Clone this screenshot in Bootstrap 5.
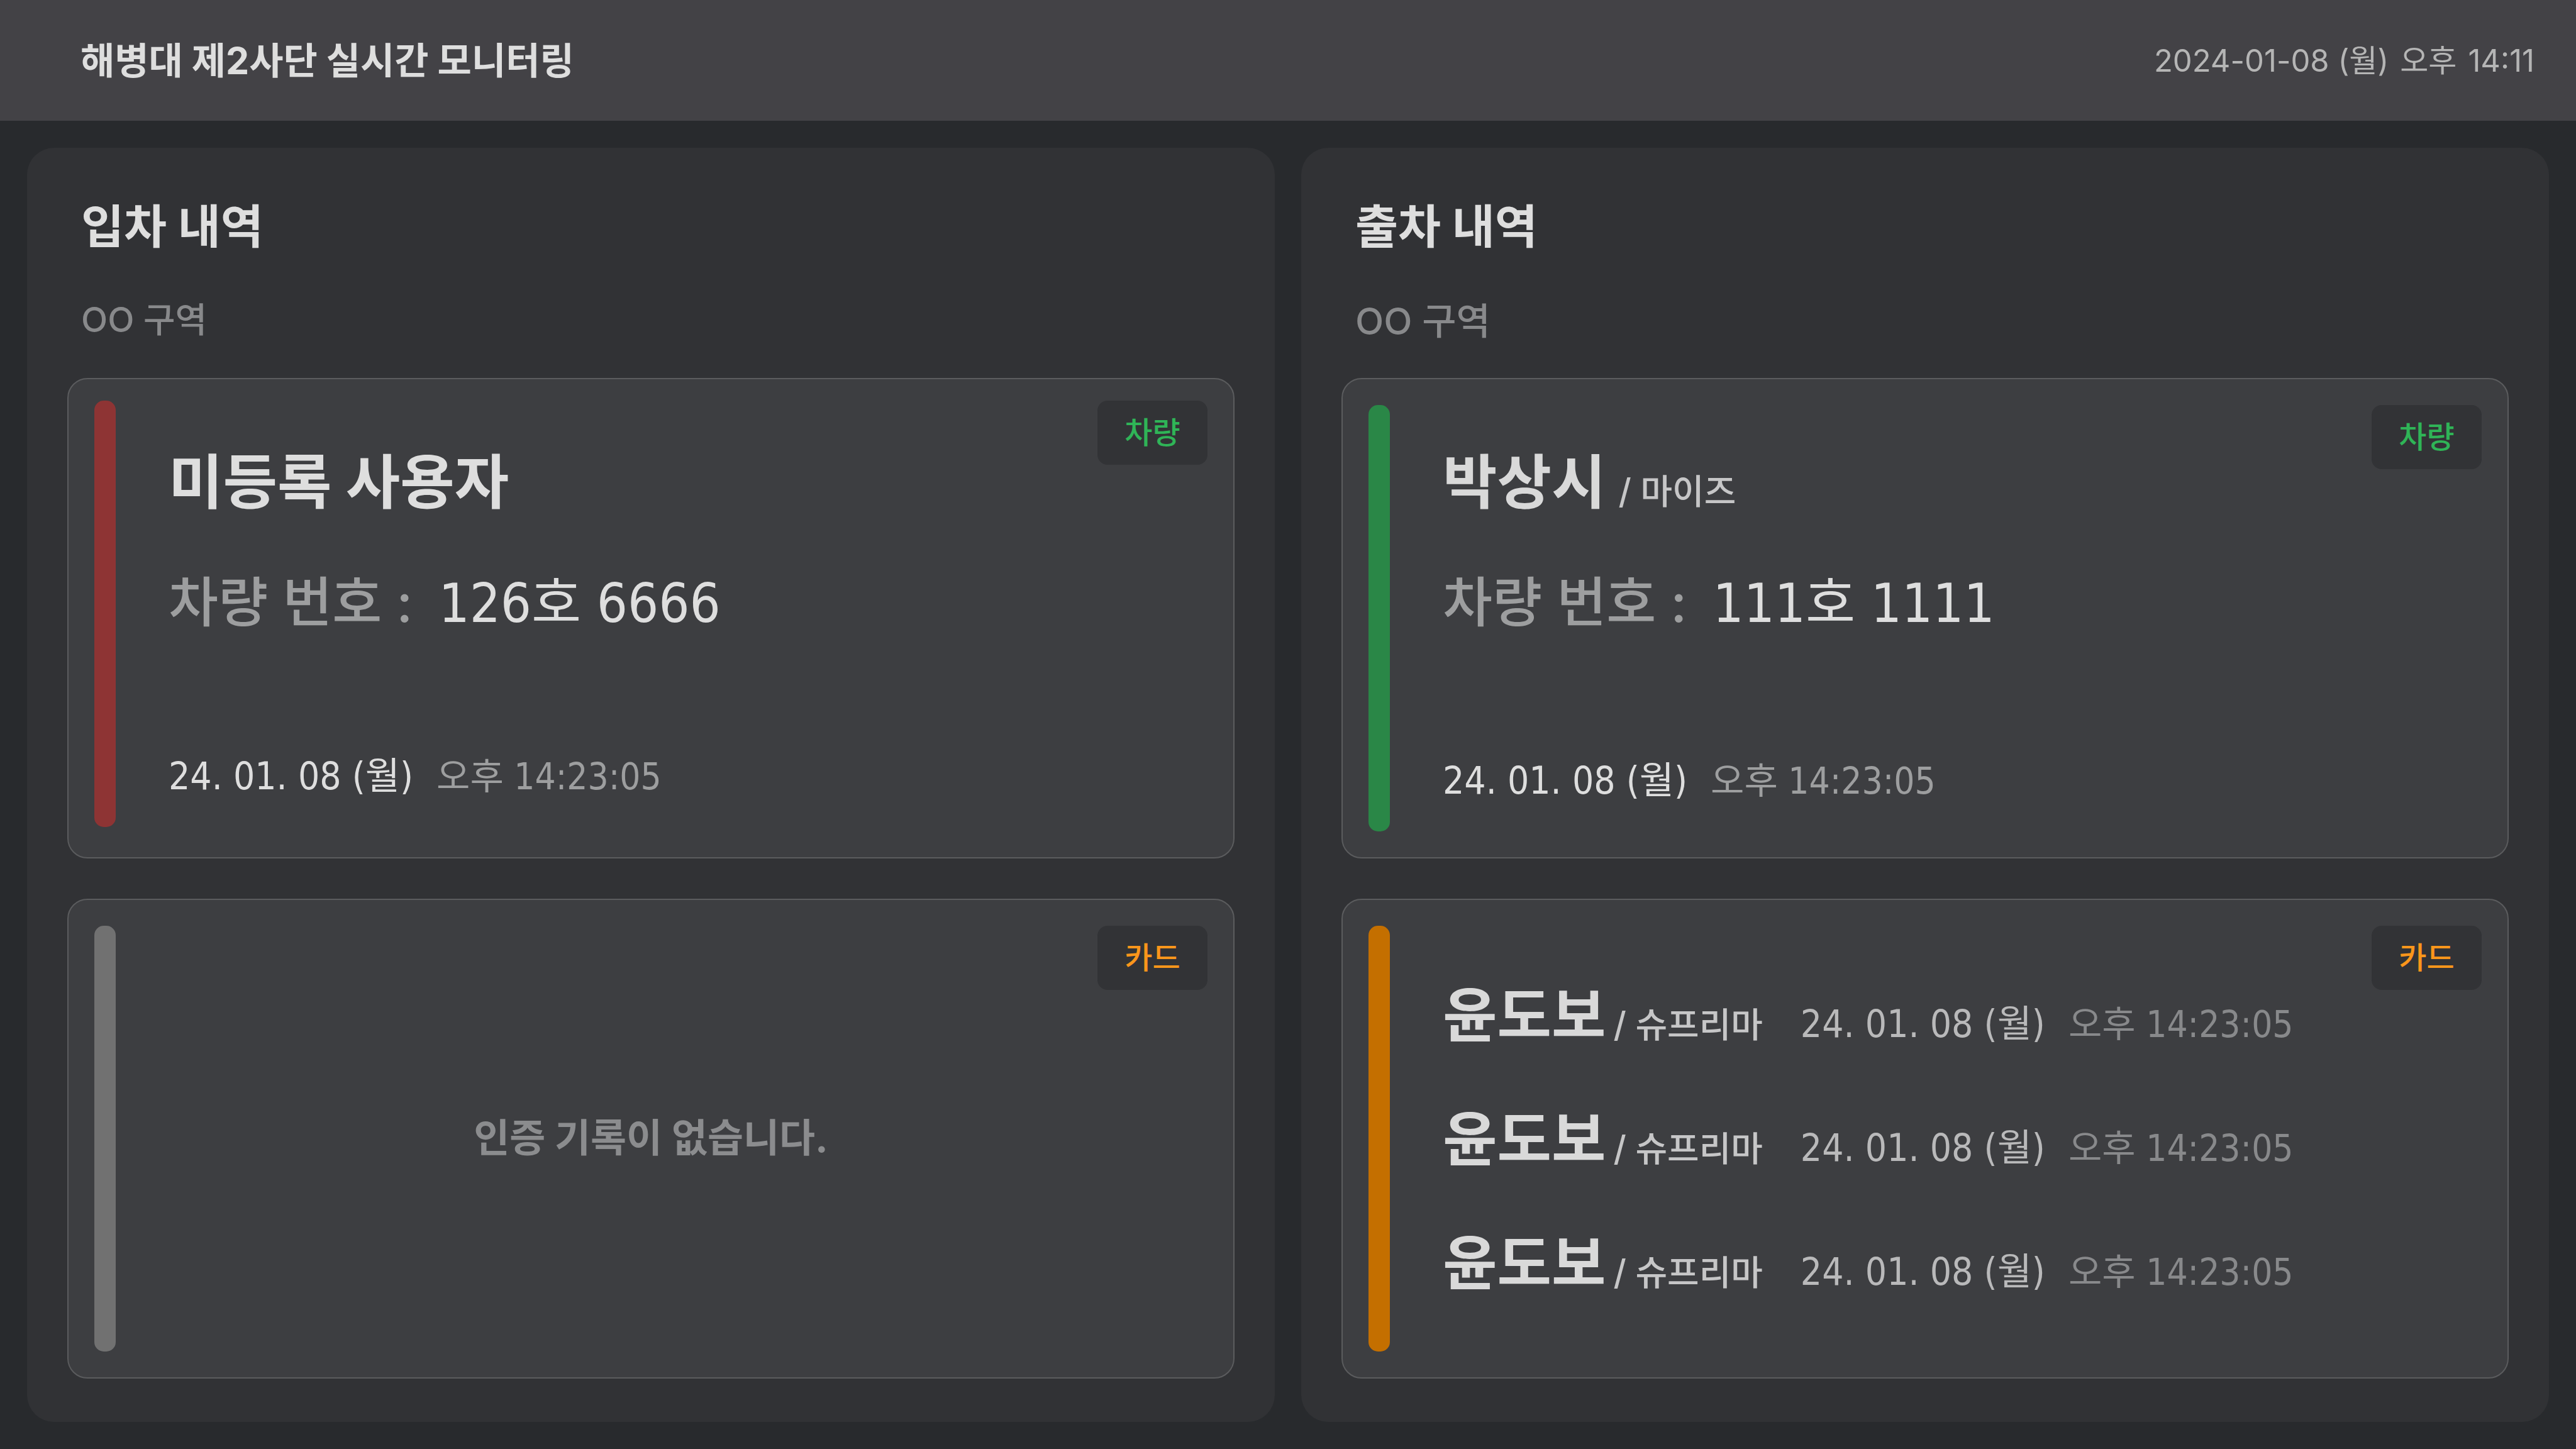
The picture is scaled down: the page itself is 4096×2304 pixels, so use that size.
<!DOCTYPE html>
<html lang="ko">
<head>
<meta charset="utf-8">
<meta name="viewport" content="width=device-width, initial-scale=1">
<title>해병대 제2사단 실시간 모니터링</title>
<link href="https://cdn.jsdelivr.net/npm/bootstrap@5.3.0/dist/css/bootstrap.min.css" rel="stylesheet">
<style>
  body { background: #282a2d; color: #dedede; font-family: Inter, "Noto Sans CJK KR", sans-serif; }
  h1, h2, p { margin: 0; }
  .topbar { background: #434246; min-height: 192px; padding: 2px 66px 0 128px; }
  .topbar h1 { font-size: 59px; line-height: 80px; font-weight: 700; margin: 0; }
  .clock { font-size: 49px; line-height: 80px; color: #b5b5b5; gap: 18px; }
  .board { padding: 43px; gap: 42px; }
  .panel { flex: 1 1 0; min-width: 0; background: #313235; border-radius: 43px; padding: 77px 64px 69px; }
  .panel-head { min-height: 289px; padding-left: 22px; }
  .panel-head h2 { font-size: 74px; line-height: 96px; font-weight: 700; margin: 0; }
  .zone { margin-top: 64px; font-size: 55px; line-height: 72px; font-weight: 500; color: #88898b; }
  .zone-lg { font-size: 59px; line-height: 78px; }
  .log-list { gap: 64px; }
  .log { flex: 1 1 0; position: relative; background: #3d3e41; border: 2px solid #5b5c5e; border-radius: 32px; padding: 41px; }
  .log-raised { padding-top: 34px; padding-bottom: 48px; }
  .bar { flex: none; width: 34px; border-radius: 15px; }
  .bar-denied { background: #8e3434; }
  .bar-granted { background: #2a8747; }
  .bar-card { background: #c46f00; }
  .bar-none { background: #717171; }
  .log-body { padding: 63px 34px 40px 84px; }
  .log-raised .log-body { padding-top: 70px; }
  .log-rows { padding: 4px 34px 0 84px; gap: 77px; }
  .tag { position: absolute; top: 41px; right: 41px; width: 175px; height: 102px; border-radius: 16px; background: #323336; font-size: 48px; line-height: 64px; font-weight: 500; }
  .log-raised .tag { top: 34px; }
  .tag-car { color: #2fb457; }
  .tag-card { color: #fa961b; }
  .who { font-size: 94px; line-height: 120px; font-weight: 700; }
  .who-known { color: #d9d9d9; }
  .dept { font-size: 55px; line-height: 80px; font-weight: 500; color: #c6c6c7; margin-left: 12px; }
  .log-body .dept { margin-left: 20px; }
  .plate { margin-top: 71px; line-height: 120px; gap: 41px; font-size: 86px; }
  .plate-label { color: #9d9e9f; font-weight: 500; }
  .plate-no, .stamp { font-family: "DejaVu Sans Condensed", "Noto Sans CJK KR", sans-serif; }
  .stamp { font-size: 60px; line-height: 80px; gap: 37px; }
  .stamp-time { color: #9d9e9f; font-size: 58px; }
  .log-rows .stamp { margin-left: 60px; color: #b9b9ba; }
  .log-rows .stamp-time { color: #88898b; }
  .blank { font-size: 62px; line-height: 80px; font-weight: 700; color: #8b8c8e; padding-right: 34px; }
</style>
</head>
<body>
<div class="d-flex flex-column min-vh-100">
  <header class="topbar d-flex align-items-center justify-content-between">
    <h1>해병대 제2사단 실시간 모니터링</h1>
    <div class="clock d-flex"><span>2024-01-08 (월)</span><span>오후</span><span>14:11</span></div>
  </header>
  <main class="board d-flex flex-fill">
    <section class="panel d-flex flex-column">
      <div class="panel-head">
        <h2>입차 내역</h2>
        <p class="zone">OO 구역</p>
      </div>
      <div class="log-list d-flex flex-column flex-fill">
        <article class="log log-raised d-flex">
          <div class="bar bar-denied"></div>
          <div class="log-body d-flex flex-column flex-fill">
            <div class="who">미등록 사용자</div>
            <div class="plate d-flex align-items-baseline"><span class="plate-label">차량 번호 :</span><span class="plate-no">126호 6666</span></div>
            <div class="stamp d-flex align-items-baseline mt-auto"><span>24. 01. 08 (월)</span><span class="stamp-time">오후 14:23:05</span></div>
          </div>
          <span class="tag tag-car d-flex align-items-center justify-content-center">차량</span>
        </article>
        <article class="log d-flex">
          <div class="bar bar-none"></div>
          <div class="blank d-flex flex-fill align-items-center justify-content-center">인증 기록이 없습니다.</div>
          <span class="tag tag-card d-flex align-items-center justify-content-center">카드</span>
        </article>
      </div>
    </section>
    <section class="panel d-flex flex-column">
      <div class="panel-head">
        <h2>출차 내역</h2>
        <p class="zone zone-lg">OO 구역</p>
      </div>
      <div class="log-list d-flex flex-column flex-fill">
        <article class="log d-flex">
          <div class="bar bar-granted"></div>
          <div class="log-body d-flex flex-column flex-fill">
            <div class="d-flex align-items-baseline"><span class="who who-known">박상시</span><span class="dept">/ 마이즈</span></div>
            <div class="plate d-flex align-items-baseline"><span class="plate-label">차량 번호 :</span><span class="plate-no">111호 1111</span></div>
            <div class="stamp d-flex align-items-baseline mt-auto"><span>24. 01. 08 (월)</span><span class="stamp-time">오후 14:23:05</span></div>
          </div>
          <span class="tag tag-car d-flex align-items-center justify-content-center">차량</span>
        </article>
        <article class="log d-flex">
          <div class="bar bar-card"></div>
          <div class="log-rows d-flex flex-column flex-fill justify-content-center">
            <div class="d-flex align-items-baseline"><span class="who who-known">윤도보</span><span class="dept">/ 슈프리마</span><span class="stamp d-flex align-items-baseline"><span>24. 01. 08 (월)</span><span class="stamp-time">오후 14:23:05</span></span></div>
            <div class="d-flex align-items-baseline"><span class="who who-known">윤도보</span><span class="dept">/ 슈프리마</span><span class="stamp d-flex align-items-baseline"><span>24. 01. 08 (월)</span><span class="stamp-time">오후 14:23:05</span></span></div>
            <div class="d-flex align-items-baseline"><span class="who who-known">윤도보</span><span class="dept">/ 슈프리마</span><span class="stamp d-flex align-items-baseline"><span>24. 01. 08 (월)</span><span class="stamp-time">오후 14:23:05</span></span></div>
          </div>
          <span class="tag tag-card d-flex align-items-center justify-content-center">카드</span>
        </article>
      </div>
    </section>
  </main>
</div>
<script src="https://cdn.jsdelivr.net/npm/bootstrap@5.3.0/dist/js/bootstrap.bundle.min.js"></script>
</body>
</html>
